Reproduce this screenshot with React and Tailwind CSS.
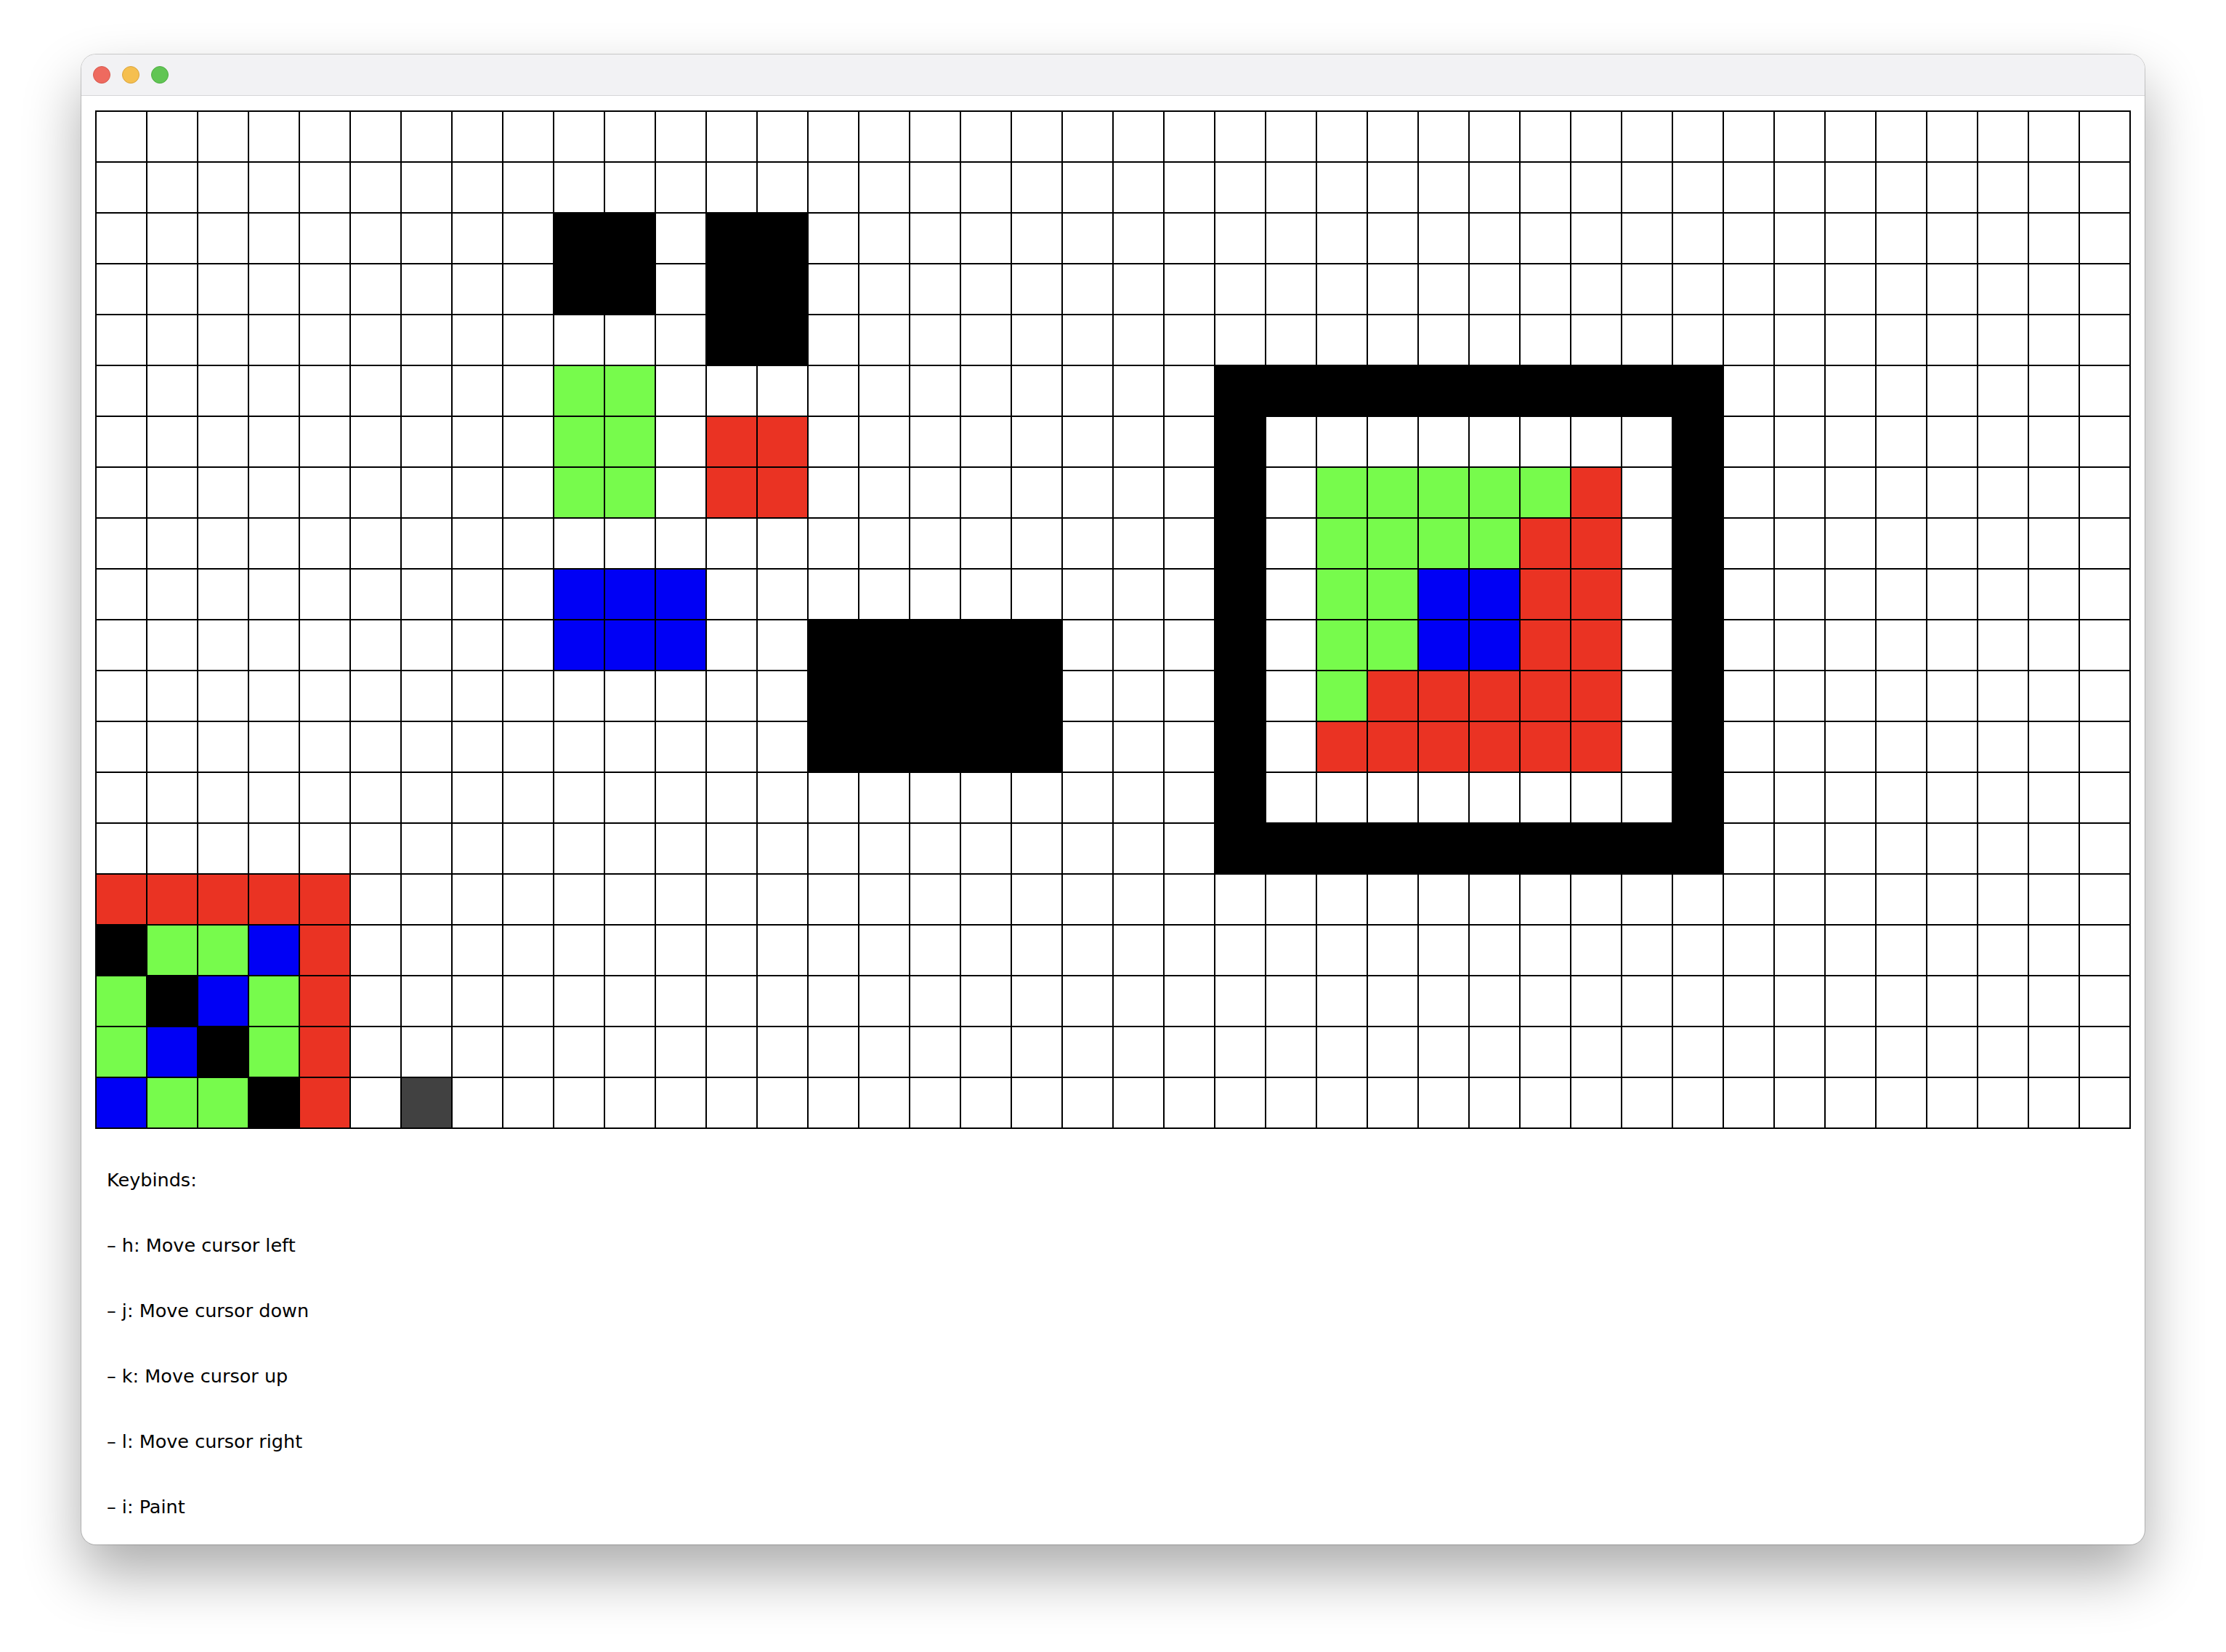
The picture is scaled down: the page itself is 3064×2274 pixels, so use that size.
import React from "react";

const ROWS = 20;
const COLS = 40;

function buildGrid() {
  const g = Array.from({ length: ROWS }, () => Array(COLS).fill("."));
  const fill = (r0, r1, c0, c1, v) => {
    for (let r = r0; r <= r1; r++) for (let c = c0; c <= c1; c++) g[r][c] = v;
  };
  fill(2, 3, 9, 10, "K");
  fill(2, 4, 12, 13, "K");
  fill(5, 7, 9, 10, "G");
  fill(6, 7, 12, 13, "R");
  fill(9, 10, 9, 11, "B");
  fill(10, 12, 14, 18, "K");
  fill(5, 14, 22, 31, "K");
  fill(6, 13, 23, 30, ".");
  fill(7, 12, 24, 29, "R");
  fill(7, 7, 24, 28, "G");
  fill(8, 8, 24, 27, "G");
  fill(9, 10, 24, 25, "G");
  fill(11, 11, 24, 24, "G");
  fill(9, 10, 26, 27, "B");
  const bl = ["RRRRR", "KGGBR", "GKBGR", "GBKGR", "BGGKR"];
  bl.forEach((s, i) => s.split("").forEach((v, c) => (g[15 + i][c] = v)));
  g[19][6] = "C";
  return g;
}

const COLOR = {
  ".": "bg-white",
  K: "bg-black",
  G: "bg-[#77fb4c]",
  R: "bg-[#ea3323]",
  B: "bg-[#0000f5]",
  C: "bg-[#414141]",
};

const LINES = [
  "Keybinds:",
  "– h: Move cursor left",
  "– j: Move cursor down",
  "– k: Move cursor up",
  "– l: Move cursor right",
  "– i: Paint",
];

export default function App() {
  const grid = buildGrid();
  return (
    <div className="w-[3064px] h-[2274px] bg-white pl-[112px] pt-[75px]">
      <div className="w-[2840px] h-[2051px] bg-white rounded-[20px] overflow-hidden flex flex-col shadow-[0_40px_80px_rgba(0,0,0,0.33),0_0_0_1px_rgba(0,0,0,0.18)]">
        <div className="h-[57px] shrink-0 bg-[#f2f2f4] border-b border-[#d6d6d8] flex items-center pl-[16px] gap-[16px]">
          <div className="w-[24px] h-[24px] rounded-full bg-[#ee6a5f] border border-[#d65a4f]" />
          <div className="w-[24px] h-[24px] rounded-full bg-[#f5bf4f] border border-[#d9a43f]" />
          <div className="w-[24px] h-[24px] rounded-full bg-[#61c554] border border-[#4fad43]" />
        </div>
        <div className="px-[19px] pt-[20px]">
          <div className="grid grid-cols-[repeat(40,68px)] grid-rows-[repeat(20,68px)] gap-[2px] p-[2px] bg-black w-fit">
            {grid.flatMap((row, r) =>
              row.map((v, c) => <div key={r + "-" + c} className={COLOR[v]} />)
            )}
          </div>
        </div>
        <div
          className="pl-[35px] pt-[25px] flex flex-col text-black text-[25.5px]"
          style={{ fontFamily: '"DejaVu Sans", sans-serif' }}
        >
          {LINES.map((t) => (
            <div key={t} className="h-[90px] leading-[90px] whitespace-pre">
              {t}
            </div>
          ))}
        </div>
      </div>
    </div>
  );
}
